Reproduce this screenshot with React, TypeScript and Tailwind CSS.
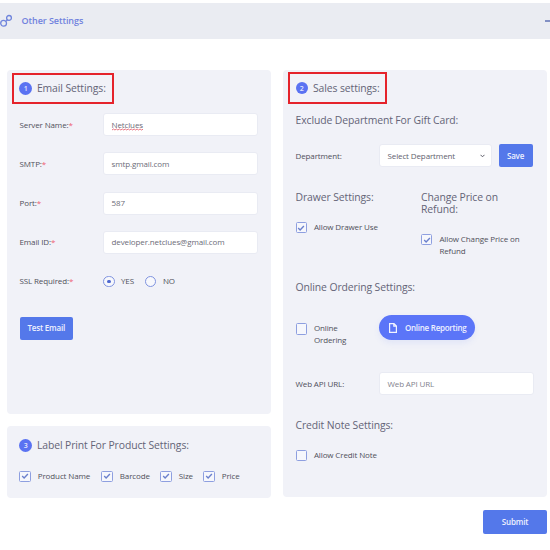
import React from "react";

function Heading({ children }: { children: React.ReactNode }) {
  return (
    <h3 className="whitespace-nowrap text-[10.4px] leading-[12.4px] font-normal tracking-[-0.1px] text-[#646477]">
      {children}
    </h3>
  );
}

function Badge({ n }: { n: number }) {
  return (
    <span className="flex size-[12.5px] shrink-0 items-center justify-center rounded-full bg-[#5a72f2] text-[7px] leading-none font-semibold text-[#e4e8fd]">
      {n}
    </span>
  );
}

function Check({ label, on = false, className = "" }: { label: React.ReactNode; on?: boolean; className?: string }) {
  return (
    <label className={`flex items-start gap-[7px] ${className}`}>
      <span className="flex size-[11.4px] shrink-0 items-center justify-center rounded-[1.5px] border border-[#8e9fe0] bg-[#f6f7fc]">
        {on && (
          <svg viewBox="0 0 8 8" className="size-[8px]" fill="none" stroke="#6b80cc" strokeWidth="1.4">
            <path d="M1.2 4.1 3.1 5.9 6.9 2" />
          </svg>
        )}
      </span>
      <span className="-mt-[1px] whitespace-nowrap leading-[12px]">{label}</span>
    </label>
  );
}

function Radio({ label, on = false }: { label: string; on?: boolean }) {
  return (
    <label className="flex items-center gap-[6.5px]">
      <span className="flex size-[11.5px] items-center justify-center rounded-full border border-[#7f93e0] bg-[#f7f8fc]">
        {on && <span className="size-[3.5px] rounded-full bg-[#4d67d0]" />}
      </span>
      <span>{label}</span>
    </label>
  );
}

function Field({ label, children }: { label: string; children: React.ReactNode }) {
  return (
    <div className="flex h-[39.15px] items-center">
      <span className="w-[83.5px] shrink-0">
        {label}
        <span className="text-[#ee6070]">*</span>
      </span>
      {children}
    </div>
  );
}

function TextBox({ children }: { children: React.ReactNode }) {
  return (
    <div className="flex h-[23px] w-[155px] items-center rounded-[3px] border border-[#e9ebf3] bg-white px-[7.5px] text-[#6c6c78]">
      {children}
    </div>
  );
}

function Squiggle() {
  return (
    <svg className="absolute top-[9px] left-0 h-[3px] w-full" viewBox="0 0 32 3" fill="none" stroke="#e05260" strokeWidth="0.8">
      <path d="M0 2 1.5 1 3 2 4.5 1 6 2 7.5 1 9 2 10.5 1 12 2 13.5 1 15 2 16.5 1 18 2 19.5 1 21 2 22.5 1 24 2 25.5 1 27 2 28.5 1 30 2 32 1" />
    </svg>
  );
}

const button = "flex items-center justify-center rounded-[2px] bg-[#5478ea] text-[8px] font-semibold tracking-[-0.2px] text-[#eef1fe]";

export default function App() {
  return (
    <div className="h-[550px] w-[550px] overflow-hidden bg-white pt-[3px] font-['Open_Sans',sans-serif] text-[8px] leading-[12px] tracking-[-0.12px] text-[#50505a]">
      <header className="flex h-[36px] items-center bg-[#eaecf2]">
        <svg className="h-[14px] w-[13px] shrink-0" viewBox="0 0 13 14" fill="none" stroke="#6f84dc" strokeWidth="1.3">
          <circle cx="3.6" cy="9.3" r="2.9" />
          <circle cx="9" cy="3.9" r="2.4" />
          <path d="M6.1 7.3 7.4 5.8" />
        </svg>
        <h2 className="ml-[8.5px] flex-1 text-[9px] font-semibold tracking-[-0.06px] text-[#7082de]">Other Settings</h2>
        <span className="h-[1.5px] w-[5px] bg-[#8290c4]" />
      </header>

      <main className="flex gap-[12px] pt-[31px] pl-[7px]">
        <div className="flex w-[264px] flex-col gap-[12px]">
          <section className="h-[344px] rounded-[4px] bg-[#f1f2f8] pt-[3px] pl-[5px]">
            <div className="flex h-[31px] w-[102px] items-center gap-[5px] border-2 border-[#e5232b] pl-[5.4px]">
              <Badge n={1} />
              <Heading>Email Settings:</Heading>
            </div>
            <div className="pt-[1.2px] pl-[7.5px]">
              <Field label="Server Name:">
                <TextBox>
                  <span className="relative">
                    Netclues
                    <Squiggle />
                  </span>
                </TextBox>
              </Field>
              <Field label="SMTP:"><TextBox>smtp.gmail.com</TextBox></Field>
              <Field label="Port:"><TextBox>587</TextBox></Field>
              <Field label="Email ID:"><TextBox>developer.netclues@gmail.com</TextBox></Field>
              <Field label="SSL Required:">
                <div className="flex gap-[11px]">
                  <Radio label="YES" on />
                  <Radio label="NO" />
                </div>
              </Field>
              <button className={`${button} mt-[16px] h-[23px] w-[53.5px]`}>Test Email</button>
            </div>
          </section>

          <section className="h-[72px] rounded-[4px] bg-[#f1f2f8] pt-[13px] pl-[12.4px]">
            <div className="flex items-center gap-[5px]">
              <Badge n={3} />
              <Heading>Label Print For Product Settings:</Heading>
            </div>
            <div className="mt-[19px] flex">
              <Check on label="Product Name" className="w-[82px]" />
              <Check on label="Barcode" className="w-[59px]" />
              <Check on label="Size" className="w-[43px]" />
              <Check on label="Price" />
            </div>
          </section>
        </div>

        <div className="flex w-[264px] flex-col">
          <section className="h-[427px] rounded-[4px] bg-[#f1f2f8] pt-[2px] pl-[5px]">
            <div className="flex h-[32px] w-[99px] items-center gap-[5px] border-2 border-[#e5232b] pl-[5.5px]">
              <Badge n={2} />
              <Heading>Sales settings:</Heading>
            </div>
            <div className="pt-[10px] pl-[7.5px]">
              <Heading>Exclude Department For Gift Card:</Heading>
              <div className="mt-[17.6px] flex items-center">
                <span className="w-[83.5px]">Department:</span>
                <div className="flex h-[23px] w-[112.5px] items-center justify-between rounded-[3px] border border-[#e9ebf3] bg-white pr-[6px] pl-[7.5px] text-[#62626e]">
                  Select Department
                  <svg className="h-[4px] w-[5px]" viewBox="0 0 5 4" fill="none" stroke="#5c5c68" strokeWidth="1">
                    <path d="M0.5 0.8 2.5 2.8 4.5 0.8" />
                  </svg>
                </div>
                <button className={`${button} ml-[7px] h-[23px] w-[34px]`}>Save</button>
              </div>
              <div className="mt-[24px] flex h-[90px]">
                <div className="w-[125.5px]">
                  <Heading>Drawer Settings:</Heading>
                  <Check on label="Allow Drawer Use" className="mt-[18.5px]" />
                </div>
                <div>
                  <Heading>Change Price on</Heading>
                  <Heading>Refund:</Heading>
                  <Check on label={<>Allow Change Price on<br />Refund</>} className="mt-[18.2px]" />
                </div>
              </div>
              <Heading>Online Ordering Settings:</Heading>
              <div className="mt-[22px] flex h-[57px]">
                <Check label={<>Online<br />Ordering</>} className="w-[83.5px] pt-[8px]" />
                <button className="flex h-[24.5px] w-[96px] items-center rounded-full bg-[#5b75f8] pl-[10px] text-[8px] font-semibold tracking-[-0.26px] text-[#edf0ff] shadow-[0_3px_6px_rgba(91,117,248,0.1)]">
                  <svg className="mr-[8px] h-[10px] w-[8px]" viewBox="0 0 8 10" fill="none" stroke="#f2f4ff" strokeWidth="1.2">
                    <path d="M0.6 0.6H5L7.4 3V9.4H0.6ZM4.8 0.8V3.2H7.2" />
                  </svg>
                  Online Reporting
                </button>
              </div>
              <div className="flex items-center">
                <span className="w-[83.5px]">Web API URL:</span>
                <TextBox><span className="text-[#83838e]">Web API URL</span></TextBox>
              </div>
              <div className="mt-[23.5px]"><Heading>Credit Note Settings:</Heading></div>
              <Check label="Allow Credit Note" className="mt-[18.5px]" />
            </div>
          </section>
          <button className={`${button} mt-[13px] h-[23.5px] w-[64px] self-end`}>Submit</button>
        </div>
      </main>
    </div>
  );
}
